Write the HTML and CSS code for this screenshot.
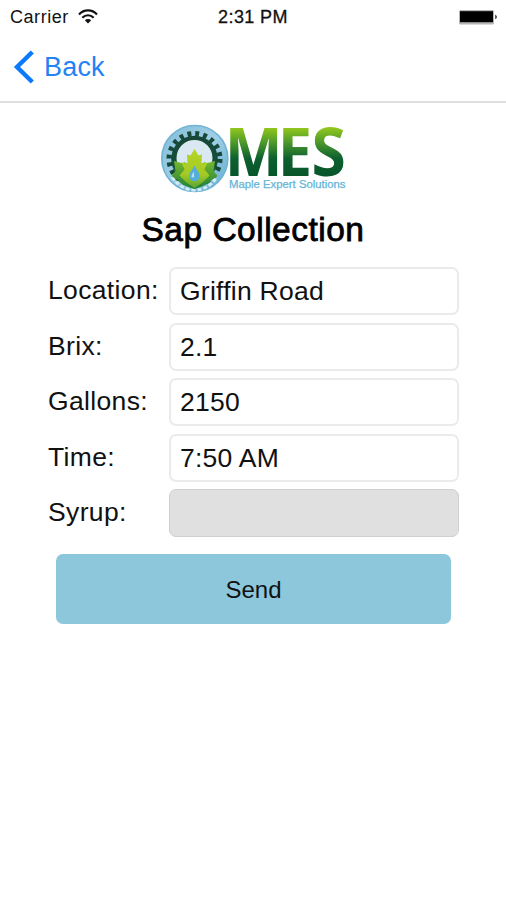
FILE: index.html
```
<!DOCTYPE html>
<html lang="en">
<head>
<meta charset="utf-8">
<title>Sap Collection</title>
<link rel="stylesheet" href="styles.css">
</head>
<body>
<div class="status">
  <div class="carrier"><span>Carrier</span>
    <svg class="wifi" width="20" height="15" viewBox="0 0 20 15" fill="none" stroke="#111" stroke-width="2.2">
      <path d="M1 5.4C6 .1 14 .1 19 5.4M4.3 8.700c3.300-3.300 8.100-3.300 11.400 0"/>
      <path d="M6.800 11.200c2-1.700 4.400-1.700 6.400 0L10 14.400z" fill="#111" stroke="none"/>
    </svg>
  </div>
  <div class="clock">2:31 PM</div>
  <svg class="battery" width="40" height="17" viewBox="0 0 40 17">
    <rect x="1" y="1" width="35" height="14.500" rx="1.500" fill="#b5b5b5"/>
    <rect x="2" y="2.200" width="33" height="11" fill="#000"/>
    <path d="M37.300 5.500q3 2.400 0 4.800z" fill="#111"/>
  </svg>
</div>
<nav class="nav">
  <svg width="21" height="34" viewBox="0 0 21 34" fill="none" stroke="#0a79fb" stroke-width="4.400"><path d="M19.300 2 4 17l15.300 15"/></svg>
  <span>Back</span>
</nav>
<main class="page">
  <svg class="logo" width="188" height="72" viewBox="160 123 188 72" role="img" aria-label="MES">
    <defs>
      <linearGradient id="ring" x1="0" y1="0" x2="1" y2="1"><stop offset="0" stop-color="#84bcd9"/><stop offset=".5" stop-color="#9fcfe5"/><stop offset="1" stop-color="#62acd2"/></linearGradient>
      <linearGradient id="gear" x1="0" y1="0" x2="0" y2="1"><stop offset="0" stop-color="#174638"/><stop offset=".65" stop-color="#125239"/><stop offset="1" stop-color="#479c42"/></linearGradient>
      <linearGradient id="word" gradientUnits="userSpaceOnUse" x1="0" y1="128" x2="0" y2="177"><stop offset="0" stop-color="#91c61c"/><stop offset=".3" stop-color="#4b982b"/><stop offset=".62" stop-color="#0d602f"/><stop offset="1" stop-color="#07542a"/></linearGradient>
      <linearGradient id="leaf" x1="0" y1="0" x2="0" y2="1"><stop offset="0" stop-color="#b4d522"/><stop offset=".65" stop-color="#a5ca26"/><stop offset="1" stop-color="#59a533"/></linearGradient>
      <linearGradient id="side" x1="0" y1="0" x2="0" y2="1"><stop offset="0" stop-color="#78b82a"/><stop offset="1" stop-color="#1f803a"/></linearGradient>
    </defs>
    <circle cx="194.800" cy="158.500" r="33" fill="url(#ring)" stroke="#70b3d4" stroke-width="1.600"/>
    <circle cx="194.500" cy="159" r="25.300" fill="none" stroke="#174838" stroke-width="5.400" stroke-dasharray="3.900 4.050"/>
    <circle cx="194.500" cy="159" r="23.300" fill="url(#gear)"/>
    <circle cx="194.500" cy="158" r="18" fill="#d9e8f1"/>
    <path d="M172 177q9 13 22.500 13t22.500-13" fill="none" stroke="#d3ecf1" stroke-width="3" stroke-dasharray="4 2"/>
    <path d="M174 161l9 2.500 1-1.500 10.500 5 10.500-5 1 1.500 9-2.500-1.500 10 4 5-6 4q-5 6-17 9-12-3-17-9l-6-4 4-5z" fill="url(#side)"/>
    <path d="M194.500 149l4 6.500 3.500-1-.5 9 6-1-3 7 5 6-7 7-8 5.500-8-5.500-7-7 5-6-3-7 6 1-.5-9 3.500 1z" fill="url(#leaf)"/>
    <path d="M194.500 165.500c2 4.500 5.200 6.500 5.200 10.500a5.200 5.200 0 0 1-10.400 0c0-4 3.200-6 5.200-10.500z" fill="#55addb"/>
    <path d="M193.500 170.500c.5 2-2.200 3.500-1.900 7l2.700-.3z" fill="#b9e2f3"/>
    <text class="wordmark" transform="scale(.93 1)" x="241.600 298.700 335" y="176" fill="url(#word)">ME<tspan class="wide">S</tspan></text>
    <text class="tagline" x="229" y="187.500" textLength="116.500" lengthAdjust="spacingAndGlyphs">Maple Expert Solutions</text>
  </svg>
  <h1>Sap Collection</h1>
  <form class="form">
    <label>Location:</label><div class="field">Griffin Road</div>
    <label>Brix:</label><div class="field">2.1</div>
    <label>Gallons:</label><div class="field">2150</div>
    <label>Time:</label><div class="field">7:50 AM</div>
    <label>Syrup:</label><div class="field disabled"></div>
  </form>
  <button class="send" type="button">Send</button>
</main>
</body>
</html>
```
FILE: styles.css
```
* { box-sizing: border-box; }
body {
  margin: 0;
  min-height: 900px;
  background: #fff;
  color: #111;
  font-family: "Liberation Sans", Arial, sans-serif;
}
.status {
  display: grid;
  grid-template-columns: 1fr auto 1fr;
  align-items: center;
  height: 34px;
  padding: 0 8px 0 10px;
  font-size: 18px;
  line-height: 34px;
}
.carrier { display: flex; align-items: center; gap: 9px; letter-spacing: .55px; }
.wifi { margin-top: -2px; }
.clock { margin-left: -2px; letter-spacing: .4px; -webkit-text-stroke: .3px #111; }
.battery { justify-self: end; }
.nav {
  display: flex;
  align-items: center;
  gap: 10px;
  height: 69px;
  padding: 0 0 1px 13px;
  border-bottom: 2px solid #dedede;
  color: #2482f3;
  font-size: 27px;
  letter-spacing: .2px;
}
.page { display: flex; flex-direction: column; align-items: center; padding-top: 20px; }
.logo { display: block; margin-left: 2px; overflow: visible; }
.wordmark { font: bold 66px "Open Sans", "Noto Sans", sans-serif; }
.wide { font-size: 67px; }
.tagline { font-size: 10px; fill: #65b5d8; stroke: #65b5d8; stroke-width: .25px; }
h1 {
  margin: 15px 0 0;
  font-size: 33.5px;
  font-weight: 400;
  line-height: 40px;
  letter-spacing: .5px;
  color: #000;
  -webkit-text-stroke: .8px #000;
}
.form {
  display: grid;
  grid-template-columns: 121px 290px;
  grid-auto-rows: 48px;
  row-gap: 7.500px;
  width: 411px;
  margin: 17px 0 0 1px;
  font-size: 26.500px;
  line-height: 46px;
}
.form label { letter-spacing: .35px; }
.field {
  padding-left: 9px;
  border: 2px solid #ebebeb;
  border-radius: 7px;
  line-height: 44px;
  letter-spacing: .25px;
}
.disabled { background: #e0e0e0; border: 1px solid #d0d0d0; }
.send {
  width: 395px;
  height: 70px;
  margin: 17px 0 0 1px;
  padding: 2px 0 0;
  border: 0;
  border-radius: 7px;
  background: #8cc7dc;
  color: #111;
  font: 24px "Liberation Sans", Arial, sans-serif;
}
```
